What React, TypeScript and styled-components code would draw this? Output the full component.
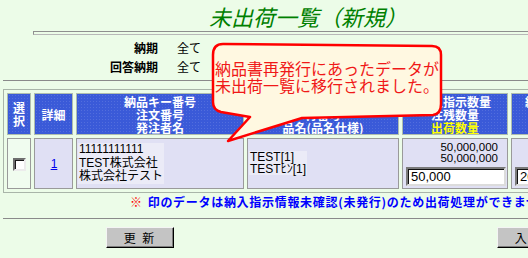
import type { ReactNode } from 'react';
import styled, { createGlobalStyle } from 'styled-components';

const GlobalStyle = createGlobalStyle`
  html, body {
    margin: 0;
    padding: 0;
    background: #ecfce8;
    overflow: hidden;
  }
  body {
    font-family: "Liberation Sans", "Noto Sans CJK JP", sans-serif;
    font-size: 12px;
    color: #000;
  }
`;

const JP = `"Noto Sans CJK JP", "Liberation Sans", sans-serif`;

type Col = { w: number; label: ReactNode };

function getColumns(): Col[] {
  const qty = (
    <>納入指示数量<br />注残数量<br /><Yellow>出荷数量</Yellow></>
  );
  return [
    { w: 24, label: <>選<br />択</> },
    { w: 39, label: '詳細' },
    { w: 168, label: <>納品キー番号<br />注文番号<br />発注者名</> },
    { w: 152, label: <>品番<br />背番号<br />品名(品名仕様)</> },
    { w: 106, label: qty },
    { w: 100, label: qty },
  ];
}

export default function App() {
  const columns = getColumns();

  return (
    <Page>
      <GlobalStyle />

      <Title>未出荷一覧（新規）</Title>
      <Rule />

      <Conditions>
        <CondLabel>納期</CondLabel>
        <CondValue>全て</CondValue>
        <CondLabel>回答納期</CondLabel>
        <CondValue>全て</CondValue>
      </Conditions>

      <Divider />

      <Table>
        <thead>
          <tr>
            {columns.map((c, i) => (
              <HeadCell key={i} $w={c.w}>{c.label}</HeadCell>
            ))}
          </tr>
        </thead>
        <tbody>
          <tr>
            <CheckCell $w={24}>
              <CheckBox type="checkbox" />
            </CheckCell>
            <DataCell $w={39} $align="center">
              <DetailLink href="#">1</DetailLink>
            </DataCell>
            <DataCell $w={168}>
              <TextBlock $lh={13.5}>
                11111111111<br />TEST株式会社<br />株式会社テスト
              </TextBlock>
            </DataCell>
            <DataCell $w={152}>
              <TextBlock $lh={12}>
                TEST[1]<br />TESTﾋﾝ[1]
              </TextBlock>
            </DataCell>
            <DataCell $w={106}>
              <Qty>50,000,000</Qty>
              <Qty>50,000,000</Qty>
              <QtyInput defaultValue="50,000" />
            </DataCell>
            <DataCell $w={100}>
              <Qty>20,000,000</Qty>
              <Qty>20,000,000</Qty>
              <QtyInput defaultValue="20,000" />
            </DataCell>
          </tr>
        </tbody>
      </Table>

      <Note>
        <NoteMark>※</NoteMark>
        印のデータは納入指示情報未確認(未発行)のため出荷処理ができません。
      </Note>

      <Divider $gap={7} />

      <ButtonRow>
        <Button>更 新</Button>
        <Button>入 力</Button>
      </ButtonRow>

      <Bubble>
        <svg width="236" height="106" viewBox="0 0 236 106">
          <path
            d="M3 15 Q3 4 13 4 L222 6 Q231 6 231 15 L231 64 Q231 74 223 75 L92 78 L18 101 L40 77 L11 72 Q3 70 3 62 Z"
            fill="#fff8e1"
            stroke="#f00"
            strokeWidth="2.5"
            strokeLinejoin="round"
          />
        </svg>
        <BubbleText>
          納品書再発行にあったデータが<br />
          未出荷一覧に移行されました。
        </BubbleText>
      </Bubble>
    </Page>
  );
}

// ─── Layout ───────────────────────────────────────────────────────────────

const Page = styled.div`
  position: relative;
  width: 640px;
  height: 258px;
  overflow: hidden;
`;

const Title = styled.h1`
  margin: 0;
  height: 31px;
  padding-left: 209px;
  font-family: ${JP};
  font-size: 22px;
  line-height: 33px;
  font-weight: normal;
  font-style: italic;
  color: #008000;
  white-space: nowrap;
`;

const Rule = styled.div`
  margin-left: 33px;
  height: 2px;
  border: 1px solid;
  border-color: #8f8f8f #e6e6e6 #b8b8b8 #8f8f8f;
`;

const Conditions = styled.div`
  display: grid;
  grid-template-columns: 68px auto;
  column-gap: 19px;
  margin-top: 3px;
  padding-left: 90px;
  font-family: ${JP};
  line-height: 19px;
`;

const CondLabel = styled.span`
  font-weight: bold;
  text-align: right;
`;

const CondValue = styled.span``;

const Divider = styled.div<{ $gap?: number }>`
  margin: ${({ $gap }) => $gap ?? 4}px 0 0 3px;
  border-top: 1px solid #8a8a8a;
`;

// ─── Table ────────────────────────────────────────────────────────────────

const Table = styled.table`
  margin: 8px 0 0 3px;
  width: 612px;
  table-layout: fixed;
  border: 1px solid #a9b5a9;
  border-collapse: separate;
  border-spacing: 3px;
`;

const HeadCell = styled.th<{ $w: number }>`
  width: ${({ $w }) => $w - 2}px;
  height: 40px;
  padding: 0;
  border: 1px solid #aebdae;
  background-color: #3a5ad8;
  background-image: radial-gradient(rgba(255, 255, 255, 0.12) 0.6px, transparent 0.7px);
  background-size: 3px 3px;
  color: #fff;
  font-family: ${JP};
  font-size: 12px;
  font-weight: bold;
  line-height: 13px;
  text-align: center;
  vertical-align: middle;
  white-space: nowrap;
  overflow: hidden;
`;

const Yellow = styled.span`
  color: #ffff00;
`;

const DataCell = styled.td<{ $w: number; $align?: string }>`
  width: ${({ $w }) => $w - 2}px;
  height: 49px;
  padding: 0 0 0 1px;
  border: 1px solid #9a9a9a;
  background: #e0e0f4;
  text-align: ${({ $align }) => $align ?? 'left'};
  vertical-align: middle;
  white-space: nowrap;
  overflow: hidden;
`;

const CheckCell = styled(DataCell)`
  background: #f0fcef;
  text-align: center;
  padding: 0;
`;

const CheckBox = styled.input`
  appearance: none;
  display: block;
  margin: 2px auto 0;
  width: 13px;
  height: 13px;
  box-sizing: border-box;
  background: #fff;
  border: 2px solid;
  border-color: #6e6e6e #ececec #ececec #6e6e6e;
  box-shadow: inset 1px 1px 0 #1a1a1a;
`;

const DetailLink = styled.a`
  color: #0000ee;
  text-decoration: underline;
  font-size: 12px;
`;

const TextBlock = styled.div<{ $lh: number }>`
  display: inline-block;
  padding: 0 1px;
  background: #ebebf7;
  font-family: "Liberation Sans", "Noto Sans CJK JP", sans-serif;
  font-size: 12px;
  line-height: ${({ $lh }) => $lh}px;
`;

const Qty = styled.div`
  padding-right: 9px;
  text-align: right;
  font-size: 11.5px;
  line-height: 11px;
`;

const QtyInput = styled.input`
  display: block;
  margin: 3px 0 0 2px;
  width: 100px;
  height: 19px;
  box-sizing: border-box;
  padding: 0 3px;
  border: 2px solid;
  border-color: #7a7a7a #dcdcdc #dcdcdc #7a7a7a;
  box-shadow: inset 1px 1px 0 #111;
  background: #fff;
  font-family: "Liberation Sans", sans-serif;
  font-size: 13px;
  color: #000;
`;

// ─── Footer ───────────────────────────────────────────────────────────────

const Note = styled.div`
  padding-left: 130px;
  height: 18px;
  line-height: 18px;
  font-family: ${JP};
  font-weight: bold;
  color: #0000ff;
  letter-spacing: 0.7px;
  white-space: nowrap;
`;

const NoteMark = styled.span`
  color: #ff0000;
  margin-right: 5px;
`;

const ButtonRow = styled.div`
  display: flex;
  gap: 323px;
  margin-top: 8px;
  padding-left: 106px;
`;

const Button = styled.button`
  width: 68px;
  height: 21px;
  padding: 0;
  background: #c4c4c4;
  border: 1px solid;
  border-color: #f4f4f4 #000 #000 #f4f4f4;
  box-shadow: inset -1px -1px 0 #7c7c7c;
  font-family: ${JP};
  font-size: 12px;
  color: #000;
  letter-spacing: 2px;
`;

// ─── Message bubble ───────────────────────────────────────────────────────

const Bubble = styled.div`
  position: absolute;
  left: 210px;
  top: 40px;
  width: 236px;
  height: 106px;

  svg {
    display: block;
  }
`;

const BubbleText = styled.div`
  position: absolute;
  left: 5px;
  top: 20px;
  font-family: ${JP};
  font-size: 16px;
  line-height: 17px;
  color: #f01818;
  white-space: nowrap;
`;
